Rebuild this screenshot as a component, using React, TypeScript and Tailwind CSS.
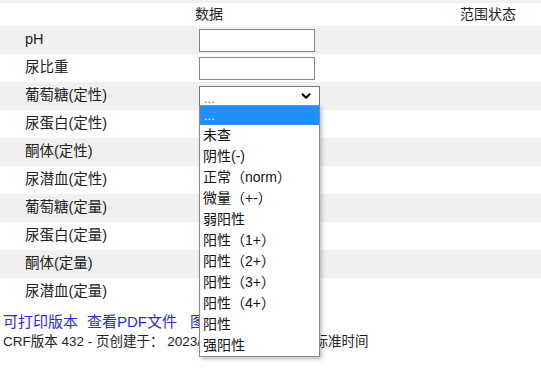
import React from 'react';
import { ChevronDown } from 'lucide-react';

const rows = [
    { label: 'pH', kind: 'input' },
    { label: '尿比重', kind: 'input' },
    { label: '葡萄糖(定性)', kind: 'select' },
    { label: '尿蛋白(定性)' },
    { label: '酮体(定性)' },
    { label: '尿潜血(定性)' },
    { label: '葡萄糖(定量)' },
    { label: '尿蛋白(定量)' },
    { label: '酮体(定量)' },
    { label: '尿潜血(定量)' },
];

const options = [
    '未查',
    '阴性(-)',
    '正常（norm）',
    '微量（+-）',
    '弱阳性',
    '阳性（1+）',
    '阳性（2+）',
    '阳性（3+）',
    '阳性（4+）',
    '阳性',
    '强阳性',
];

const OpenSelect: React.FC = () => {
    return (
        <div className="relative ml-1 w-[121px]">
            <div className="flex h-[20px] items-center justify-between border border-[#767676] bg-white pl-1 pr-1.5">
                <span className="pt-1 text-[13px] leading-none text-[#777]">...</span>
                <ChevronDown className="h-[14px] w-[14px] text-black" strokeWidth={3.5} />
            </div>
            {/* open option list */}
            <div className="absolute left-0 top-[19px] z-10 w-[121px] border border-[#8a8a8a] bg-white shadow-[2px_2px_4px_rgba(0,0,0,0.25)]">
                <div className="flex h-[19px] items-center bg-[#1e8fff] pl-1 text-[13px] text-white">...</div>
                {options.map((o) => (
                    <div key={o} className="flex h-[21px] items-center pl-[3px] text-[14px] text-[#111]">
                        {o}
                    </div>
                ))}
            </div>
        </div>
    );
};

const App: React.FC = () => {
    return (
        <div className="h-[368px] w-[541px] overflow-hidden bg-white font-['Liberation_Sans','Noto_Sans_CJK_SC',sans-serif] text-[14.5px] text-[#222]">
            <div className="h-[3px] bg-[#f0f0f0]" />

            {/* header */}
            <div className="grid h-[23px] grid-cols-[195px_265px_1fr] items-center text-[14px]">
                <div />
                <div>数据</div>
                <div>范围状态</div>
            </div>

            {rows.map((r, i) => (
                <div
                    key={r.label}
                    className={`grid h-[28px] grid-cols-[195px_265px_1fr] items-center ${i % 2 === 0 ? 'bg-[#f0f0f0]' : 'bg-white'}`}
                >
                    <div className="pl-[25px]">{r.label}</div>
                    <div>
                        {r.kind === 'input' && (
                            <div className="ml-1 h-[23px] w-[116px] border border-[#858585] bg-white" />
                        )}
                        {r.kind === 'select' && <OpenSelect />}
                    </div>
                    <div />
                </div>
            ))}

            {/* links + footer */}
            <div className="mt-[7px] flex pl-[3px] text-[15px] leading-[18px] text-[#2b2bd9]">
                <span className="mr-[9px]">可打印版本</span>
                <span className="mr-[13px]">查看PDF文件</span>
                <span>图表</span>
            </div>
            <div className="mt-[2px] pl-[3px] text-[13.5px] leading-[18px] text-[#222]">
                CRF版本 432 - 页创建于： 2023/5/16 10:24:31 中国标准时间
            </div>
        </div>
    );
};

export default App;
